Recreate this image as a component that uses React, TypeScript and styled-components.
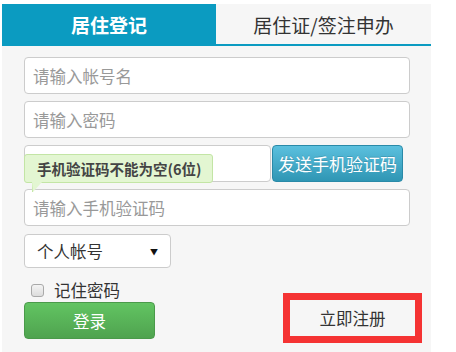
import React from "react";
import styled, { createGlobalStyle } from "styled-components";

const GlobalStyle = createGlobalStyle`
  html, body {
    margin: 0;
    padding: 0;
    background: #ffffff;
  }
  body {
    font-family: "Noto Sans CJK SC", "Liberation Sans", sans-serif;
    color: #333;
  }
`;

const Page = styled.div`
  padding: 4px 0 0 2px;
  width: 456px;
  height: 352px;
  box-sizing: border-box;
  overflow: hidden;
`;

const Panel = styled.div`
  width: 429px;
  height: 348px;
  background: #f6f6f6;
`;

const TabBar = styled.div`
  display: flex;
  height: 40px;
  border-bottom: 2px solid #0b9bc1;
`;

const Tab = styled.div<{ $active?: boolean }>`
  width: ${(p) => (p.$active ? "214px" : "auto")};
  flex: ${(p) => (p.$active ? "none" : "1")};
  display: flex;
  align-items: center;
  justify-content: center;
  font-size: 19px;
  font-weight: ${(p) => (p.$active ? 700 : 400)};
  color: ${(p) => (p.$active ? "#ffffff" : "#333333")};
  background: ${(p) => (p.$active ? "#0b9bc1" : "#f6f6f6")};
`;

const Form = styled.div`
  display: flex;
  flex-direction: column;
  padding: 11px 0 0 22px;
`;

const Field = styled.input<{ $width?: number }>`
  box-sizing: border-box;
  width: ${(p) => p.$width ?? 386}px;
  height: 37px;
  margin: 0 0 7px;
  padding: 0 8px;
  border: 1px solid #cccccc;
  border-radius: 4px;
  background: #ffffff;
  font-family: inherit;
  font-size: 16.5px;
  color: #333;
  outline: none;
  &::placeholder {
    color: #999999;
  }
`;

const CodeRow = styled.div`
  position: relative;
  display: flex;
  gap: 1px;
  margin-bottom: 7px;
  & > input {
    margin: 0;
  }
`;

const SendButton = styled.button`
  box-sizing: border-box;
  width: 131px;
  height: 37px;
  border: 1px solid #2a8aa8;
  border-radius: 4px;
  background: linear-gradient(#5bc0de, #2f96b4);
  color: #ffffff;
  font-family: inherit;
  font-size: 17px;
  padding: 0;
  text-shadow: 0 -1px 0 rgba(0, 0, 0, 0.15);
`;

const Tip = styled.div`
  position: absolute;
  left: 0;
  top: 9px;
  box-sizing: border-box;
  width: 189px;
  height: 29px;
  padding-left: 12px;
  display: flex;
  align-items: center;
  background: #e3f6d2;
  border: 1px solid #c3e5a5;
  border-radius: 3px;
  font-size: 14.5px;
  font-weight: 700;
  color: #444;
  &::after {
    content: "";
    position: absolute;
    left: 7px;
    bottom: -10px;
    border-left: 1px solid #c3e5a5;
    border-top: 10px solid #e3f6d2;
    border-right: 9px solid transparent;
  }
`;

const SelectBox = styled.div`
  box-sizing: border-box;
  width: 147px;
  height: 34px;
  margin-top: 1px;
  padding: 0 12px 0 12px;
  display: flex;
  align-items: center;
  justify-content: space-between;
  background: #ffffff;
  border: 1px solid #cccccc;
  border-radius: 4px;
  font-size: 16.5px;
  color: #333;
`;

const Arrow = styled.span`
  font-size: 8px;
  color: #111;
`;

const Bottom = styled.div`
  display: flex;
  align-items: flex-end;
  margin-top: 10px;
`;

const LeftCol = styled.div`
  display: flex;
  flex-direction: column;
  width: 259px;
`;

const Remember = styled.label`
  display: flex;
  align-items: center;
  gap: 10px;
  padding-left: 7px;
  height: 24px;
  font-size: 16.5px;
  color: #333;
`;

const Box = styled.span`
  width: 13px;
  height: 13px;
  box-sizing: border-box;
  border: 1px solid #a9a9a9;
  border-radius: 3px;
  background: linear-gradient(#f4f4f4, #dcdcdc);
`;

const LoginButton = styled.button`
  box-sizing: border-box;
  width: 131px;
  height: 37px;
  border: 1px solid #4a9a4a;
  border-radius: 4px;
  background: linear-gradient(#62c462, #4fa34f);
  color: #ffffff;
  font-family: inherit;
  font-size: 16.5px;
  padding: 0;
`;

const RegisterLink = styled.a`
  box-sizing: border-box;
  width: 139px;
  height: 50px;
  margin-bottom: -4px;
  display: flex;
  align-items: center;
  justify-content: center;
  border: 7px solid #f53333;
  background: #f6f6f6;
  color: #333;
  font-size: 16.5px;
  text-decoration: none;
`;

export default function App() {
  return (
    <Page>
      <GlobalStyle />
      <Panel>
        <TabBar>
          <Tab $active>居住登记</Tab>
          <Tab>居住证/签注申办</Tab>
        </TabBar>
        <Form>
          <Field placeholder="请输入帐号名" />
          <Field type="password" placeholder="请输入密码" />
          <CodeRow>
            <Field $width={247} />
            <SendButton>发送手机验证码</SendButton>
            <Tip>手机验证码不能为空(6位)</Tip>
          </CodeRow>
          <Field placeholder="请输入手机验证码" />
          <SelectBox>
            个人帐号
            <Arrow>▼</Arrow>
          </SelectBox>
          <Bottom>
            <LeftCol>
              <Remember>
                <Box />
                记住密码
              </Remember>
              <LoginButton>登录</LoginButton>
            </LeftCol>
            <RegisterLink href="#">立即注册</RegisterLink>
          </Bottom>
        </Form>
      </Panel>
    </Page>
  );
}
